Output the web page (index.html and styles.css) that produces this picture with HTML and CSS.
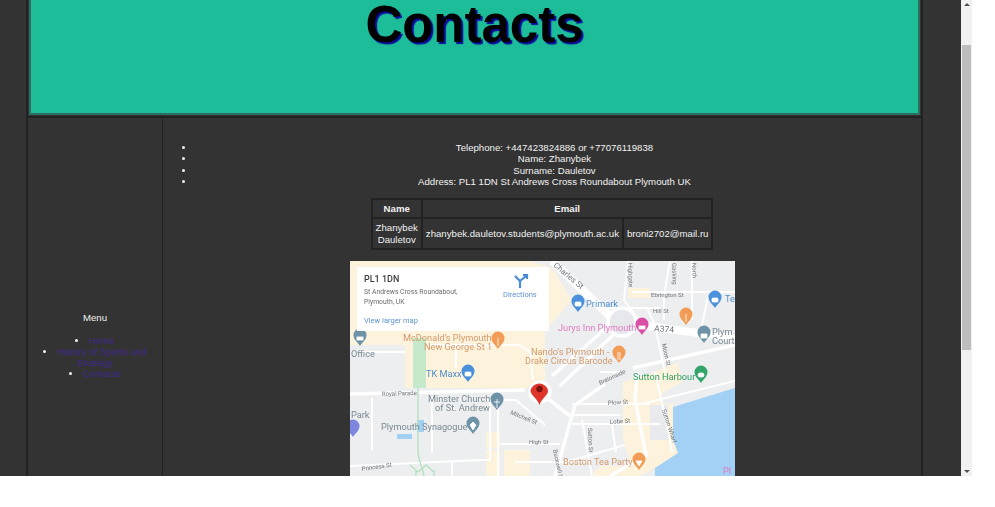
FILE: index.html
```html
<!DOCTYPE html>
<html lang="en">
<head>
  <meta charset="UTF-8">
  <title>Contacts</title>
  <link rel="stylesheet" href="styles.css">
</head>
<body>
  <div class="window">
    <div class="page">
      <div class="frame">
        <header class="banner">
          <h1>Contacts</h1>
        </header>
        <div class="content">
          <nav class="sidebar">
            <p class="menu-title">Menu</p>
            <ul class="menu">
              <li><a href="#">Home</a></li>
              <li><a href="#">History of Sports and Strategy</a></li>
              <li><a href="#">Contacts</a></li>
            </ul>
          </nav>
          <main class="main">
            <ul class="details">
              <li>Telephone: +447423824886 or +77076119838</li>
              <li>Name: Zhanybek</li>
              <li>Surname: Dauletov</li>
              <li>Address: PL1 1DN St Andrews Cross Roundabout Plymouth UK</li>
            </ul>
            <table class="emails">
              <tr>
                <th>Name</th>
                <th colspan="2">Email</th>
              </tr>
              <tr>
                <td class="who">Zhanybek Dauletov</td>
                <td>zhanybek.dauletov.students@plymouth.ac.uk</td>
                <td>broni2702@mail.ru</td>
              </tr>
            </table>
            <svg class="map" viewBox="350 261 385 300" width="385" height="300">
              <defs>
                <path id="pin" d="M0 7C-2 3.500-6.500 1-6.500-4A6.500 6.500 0 0 1 6.500-4C6.500 1 2 3.500 0 7Z"/>
              </defs>
              <rect class="land" x="350" y="261" width="385" height="300"/>

              <!-- beige blocks -->
              <path class="block" d="M350 345H545V331L572 300L552 268L530 261H350Z"/>
              <path class="block" d="M405 345H545V388H405Z"/>
              <path class="block" d="M628 288H650V298H628Z"/>
              <path class="block" d="M654 372L678 362L682 382L664 392L660 404H673V440L680 452L655 468L640 476H590L600 466H632L623 440V382Z"/>
              <path class="block" d="M486 432H500V448H486ZM504 450H530V476H504ZM486 450H500V476H486Z"/>
              <path class="park" d="M413 338H426V388H413Z"/>
              <path class="block-grey" d="M650 405H668V440H650Z"/>

              <!-- water -->
              <path class="water" d="M735 388L673 407V440L678 453L655 468V476H735Z"/>
              <path class="water" d="M417 420H424V432H417ZM397 434H412V439H397Z"/>

              <!-- roads -->
              <g class="road thin">
                <path d="M358 352H405M430 345H520L530 352L533 380"/>
                <path d="M456 345V368"/>
                <path d="M372 398V450"/>
                <path d="M432 398V452"/>
                <path d="M350 466L480 460H490V400"/>
                <path d="M498 394V476"/>
                <path d="M484 400H516L545 425"/>
                <path d="M500 444H560"/>
                <path d="M515 462H590"/>
                <path d="M452 460V476"/>
                <path d="M572 404H650"/>
                <path d="M572 415H620M572 424H660"/>
                <path d="M582 420L592 476"/>
                <path d="M612 425L616 452"/>
                <path d="M566 462L625 445"/>
                <path d="M632 292H735"/>
                <path d="M628 261L624 300L640 322"/>
                <path d="M670 261L664 296V320"/>
                <path d="M692 261V320"/>
                <path d="M708 296L700 335"/>
                <path d="M600 308H660"/>
                <path d="M647 308L655 325"/>
                <path d="M655 325L665 372"/>
                <path d="M655 372L668 430L672 452"/>
                <path d="M620 372H600"/>
                <path d="M637 405L735 381"/>
              </g>
              <g class="road medium">
                <path d="M350 394L525 390"/>
                <path d="M606 328L552 376"/>
                <path d="M616 332L560 386"/>
                <path d="M633 368L735 345"/>
                <path d="M637 372L635 400L646 455L610 476"/>
                <path d="M547 398L570 416"/>
                <path d="M605 384L575 405L555 476"/>
              </g>
              <g class="road">
                <path d="M552 261L612 318"/>
                <path d="M632 324L735 338"/>
              </g>
              <circle class="ring" cx="540" cy="392" r="10"/>
              <circle class="ring" cx="622" cy="322" r="14"/>
              <path class="canal" d="M418 388V450C418 460 422 465 424 476"/>
              <path class="canal" d="M410 465L418 472L426 465L434 472M416 470V476M434 470V476"/>

              <!-- street names -->
              <g class="street">
                <text x="382" y="396" transform="rotate(-2 382 396)">Royal Parade</text>
                <text x="362" y="471" transform="rotate(-8 362 471)">Princess St</text>
                <text x="510" y="414" transform="rotate(22 510 414)">Mitchell St</text>
                <text x="529" y="444">High St</text>
                <text x="600" y="385" transform="rotate(-25 600 385)">Bretonside</text>
                <text x="608" y="405" transform="rotate(-4 608 405)">Plow St</text>
                <text x="610" y="424" transform="rotate(-4 610 424)">Lobe St</text>
                <text x="588" y="428" transform="rotate(88 588 428)">Sutton St</text>
                <text x="553" y="450" transform="rotate(78 553 450)">Buckwell St</text>
                <text x="662" y="410" transform="rotate(72 662 410)">Sutton Wharf</text>
                <text x="651" y="297">Ebrington St</text>
                <text x="653" y="313">Hill St</text>
                <text x="662" y="344" transform="rotate(78 662 344)">Moon St</text>
                <text x="628" y="263" transform="rotate(88 628 263)">Highgate</text>
                <text x="672" y="263" transform="rotate(88 672 263)">Gasking</text>
                <text x="692" y="263" transform="rotate(88 692 263)">North</text>
              </g>
              <text class="street big" x="553" y="266" transform="rotate(40 553 266)">Charles St</text>
              <text class="street road-name" x="654" y="331" transform="rotate(5 654 331)">A374</text>

              <!-- place labels -->
              <g class="label orange">
                <text x="403" y="341">McDonald's Plymouth</text>
                <text x="424" y="350">New George St 1</text>
                <text x="531" y="355">Nando's Plymouth -</text>
                <text x="525" y="364">Drake Circus Barcode</text>
                <text x="563" y="465">Boston Tea Party</text>
              </g>
              <g class="label blue">
                <text x="586" y="307">Primark</text>
                <text x="426" y="377">TK Maxx</text>
                <text x="725" y="302">Te</text>
              </g>
              <g class="label grey">
                <text x="351" y="357">Office</text>
                <text x="428" y="402">Minster Church</text>
                <text x="435" y="411">of St. Andrew</text>
                <text x="381" y="430">Plymouth Synagogue</text>
                <text x="351" y="418">Park</text>
                <text x="712" y="335">Plym</text>
                <text x="712" y="344">Court</text>
              </g>
              <text class="label pink" x="558" y="331">Jurys Inn Plymouth</text>
              <text class="label green" x="633" y="380">Sutton Harbour</text>
              <text class="label pink" x="723" y="474">Pl</text>

              <!-- place pins -->
              <g class="pin-blue">
                <use href="#pin" transform="translate(578 305)"/>
                <use href="#pin" transform="translate(468 375)"/>
                <use href="#pin" transform="translate(715 301)"/>
              </g>
              <g class="pin-orange">
                <use href="#pin" transform="translate(498 342)"/>
                <use href="#pin" transform="translate(619 356)"/>
                <use href="#pin" transform="translate(686 318)"/>
                <use href="#pin" transform="translate(639 463)"/>
              </g>
              <g class="pin-slate">
                <use href="#pin" transform="translate(360 339)"/>
                <use href="#pin" transform="translate(704 336)"/>
                <use href="#pin" transform="translate(497 403)"/>
                <use href="#pin" transform="translate(473 427)"/>
              </g>
              <use class="pin-pink" href="#pin" transform="translate(642 328)"/>
              <use class="pin-green" href="#pin" transform="translate(701 376)"/>
              <use class="pin-violet" href="#pin" transform="translate(353 430)"/>
              <g class="pin-mark">
                <rect x="575" y="302" width="6" height="4" rx="1"/>
                <rect x="465" y="372" width="6" height="4" rx="1"/>
                <rect x="712" y="298" width="6" height="4" rx="1"/>
                <rect x="357" y="337" width="6" height="3"/>
                <rect x="701" y="334" width="6" height="4"/>
                <rect x="639" y="326" width="6" height="3"/>
                <rect x="698" y="373" width="6" height="4" rx="2"/>
                <path d="M498 338V346M618 352V360M620 352V360M686 314V322M636 461H642L639 466Z"/>
                <path d="M497 399V408M494 402H500M470 425L473 422L476 425L473 430Z"/>
              </g>

              <!-- marker -->
              <path class="marker" d="M539.500 405C537 398 530.500 395 530.500 390.500A9 9 0 0 1 548 390.500C548 395 542 398 539.500 405Z"/>
              <circle class="marker-dot" cx="539.500" cy="389" r="3.200"/>

              <!-- place card -->
              <rect class="card" x="357" y="267" width="192" height="64"/>
              <text class="card-title" x="364" y="282">PL1 1DN</text>
              <text class="card-line" x="364" y="294">St Andrews Cross Roundabout,</text>
              <text class="card-line" x="364" y="304">Plymouth, UK</text>
              <text class="card-link" x="364" y="323">View larger map</text>
              <text class="card-link" x="503" y="297">Directions</text>
              <path class="card-icon" d="M520 288V281L515 276M520 281L526 276M523 275H527V279"/>
            </svg>
          </main>
        </div>
      </div>
    </div>
    <div class="scrollbar">
      <span class="arrow-up"></span>
      <div class="track"><div class="thumb"></div></div>
      <span class="arrow-down"></span>
    </div>
  </div>
</body>
</html>
```

FILE: styles.css
```css
body {
  margin: 0;
  background: #fff;
  font-family: "Liberation Sans", Arial, sans-serif;
  font-size: 9.65px;
  line-height: 11.3px;
  color: #f2f2f2;
}

.window {
  display: flex;
  width: 972px;
  height: 476px;
  overflow: hidden;
}

.page {
  width: 961px;
  height: 476px;
  padding-left: 26px;
  box-sizing: border-box;
  background: #333;
  overflow: hidden;
}

.frame {
  width: 897px;
  box-sizing: border-box;
  border-left: 2px solid #222;
  border-right: 2px solid #222;
}

.banner {
  height: 115px;
  box-sizing: border-box;
  margin: 0 1px;
  border: 2px solid #2c6f60;
  border-top: none;
  background: #1dbd9a;
  text-align: center;
}

h1 {
  margin: 0;
  font-size: 51px;
  line-height: 50px;
  color: #000;
  text-shadow: 2px 2px 1px #0a0a9a;
}

.content {
  display: flex;
  margin-top: 1px;
  border-top: 2px solid #222;
}

.sidebar {
  display: flex;
  flex-direction: column;
  justify-content: center;
  width: 135px;
  flex-shrink: 0;
  box-sizing: border-box;
  border-right: 1.5px solid #222;
  text-align: center;
}

.menu-title {
  margin: 0 0 11px;
}

.menu {
  margin: 0;
  padding: 0 12px;
  list-style-position: inside;
}

.menu a {
  color: #42288c;
  text-decoration: none;
}

.main {
  flex: 1;
  padding: 24px 0 13px;
}

.details {
  margin: 0 0 11px;
  padding: 0 7px 0 32px;
  text-align: center;
}

.emails {
  margin: 0 auto 11px;
  border-collapse: collapse;
  text-align: center;
}

.emails th,
.emails td {
  border: 2px solid #222;
  padding: 3px;
}

.who {
  width: 42px;
}

.map {
  display: block;
  margin: 0 auto;
  filter: blur(0.35px);
}

/* map fills */
.land { fill: #eceef0; }
.block { fill: #fdf3dc; }
.block-grey { fill: #e8eaed; }
.park { fill: #c6e8cb; }
.water { fill: #a3d0f5; }
.road { fill: none; stroke: #fff; stroke-width: 8; }
.road.medium { stroke-width: 3.500; }
.road.thin { stroke-width: 2; }
.ring { fill: #e6e8eb; stroke: #fff; stroke-width: 3.500; }
.canal { fill: none; stroke: #b7e2c0; stroke-width: 1.400; }

/* map labels */
.map text {
  font-family: Roboto, "Liberation Sans", sans-serif;
}

.street { font-size: 6px; fill: #70757a; }
.street.big { font-size: 8px; }
.road-name { font-size: 8.500px; }
.label { font-size: 9.200px; }
.orange { fill: #d39a6c; }
.blue { fill: #4f8ecb; }
.grey { fill: #7b8a92; }
.pink { fill: #e07cc2; }
.green { fill: #2f9e66; }

.pin-blue { fill: #4a90dc; }
.pin-orange { fill: #f29d57; }
.pin-slate { fill: #6f93a6; }
.pin-pink { fill: #da4fa6; }
.pin-green { fill: #34a56b; }
.pin-violet { fill: #7f86e0; }
.pin-mark { fill: #fff; stroke: #fff; stroke-width: 0.800; }

.marker { fill: #e0352b; }
.marker-dot { fill: #7a120d; }

/* map place card */
.card { fill: #fff; }
.card-title { font-size: 9px; font-weight: 500; fill: #3c3c3c; }
.card-line { font-size: 6.800px; fill: #6c6c6c; }
.card-link { font-size: 7.500px; fill: #5b94cf; }
.card-icon { fill: none; stroke: #4a8bd6; stroke-width: 2.200; }

.scrollbar {
  display: flex;
  flex-direction: column;
  width: 11px;
  background: #f1f1f1;
}

.track {
  flex: 1;
  margin: 36px 1px 0;
}

.thumb {
  height: 305px;
  background: #bdbdbd;
}

.arrow-up,
.arrow-down {
  width: 0;
  height: 0;
  margin: 3px auto;
  border-left: 3px solid transparent;
  border-right: 3px solid transparent;
}

.arrow-up {
  border-bottom: 3px solid #505050;
}

.arrow-down {
  border-top: 3px solid #505050;
}
```
